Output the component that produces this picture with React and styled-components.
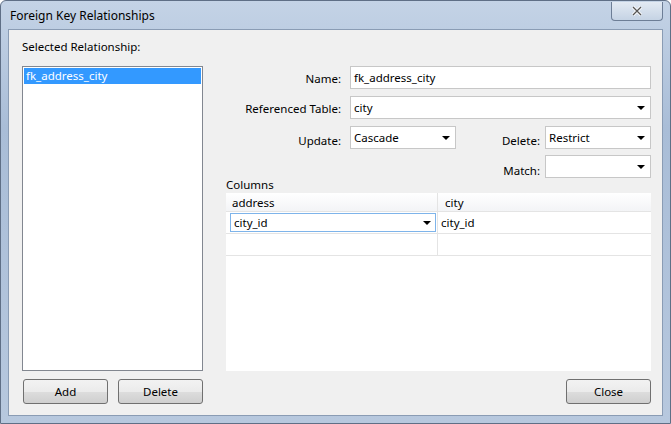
import React from "react";
import styled, { createGlobalStyle } from "styled-components";

const G = createGlobalStyle`
  html,body{margin:0;padding:0;}
  body{font-family:"Noto Sans","DejaVu Sans",sans-serif;font-size:11.5px;color:#000;}
`;
const Frame = styled.div`
  width:671px;height:424px;box-sizing:border-box;display:flex;flex-direction:column;
  background:linear-gradient(180deg,#c4d3e6 0%,#a9bdd7 30%,#b7c8de 100%);
  border:1px solid #5f6f86;border-radius:6px 6px 0 0;padding:0 7px 7px;
`;
const TitleBar = styled.div`
  height:29px;display:flex;align-items:center;justify-content:space-between;padding-left:2px;
`;
const Title = styled.span`font-size:12px;color:#000;`;
const CloseX = styled.div`
  width:52px;height:19px;margin-top:-8px;box-sizing:border-box;border:1px solid #6d7e96;border-top:none;
  border-radius:0 0 4px 4px;background:linear-gradient(#e3eaf3,#c5d3e4);display:flex;align-items:center;justify-content:center;
`;
const Body = styled.div`
  flex:1;background:#f0f0f0;border:1px solid #8a9cb4;display:flex;flex-direction:column;
  padding:9px 11px 11px 13px;
`;
const Caption = styled.div`height:20px;line-height:16px;`;
const Main = styled.div`display:flex;gap:23px;height:305px;margin-top:7px;`;
const List = styled.div`width:181px;box-sizing:border-box;border:1px solid #828790;background:#fff;padding:1px;`;
const ListItem = styled.div`background:#3399ff;color:#fff;height:16px;line-height:15px;padding-left:2px;`;
const Right = styled.div`flex:1;display:flex;flex-direction:column;`;
const Row = styled.div`display:flex;align-items:flex-start;height:23px;margin-bottom:${p=>p.mb||7}px;`;
const Label = styled.div`width:${p=>p.w||115}px;text-align:right;padding-top:${p=>p.pt||5}px;margin-right:${p=>p.mr||9}px;flex:none;`;
const Field = styled.div`
  ${p=>p.w?`width:${p.w}px;`:"flex:1;"}height:23px;box-sizing:border-box;border:1px solid #c7c7c7;background:#fff;
  display:flex;align-items:center;justify-content:space-between;padding:0 5px 0 3px;
`;
const Arrow = styled.span`width:0;height:0;border-left:4px solid transparent;border-right:4px solid transparent;border-top:4px solid #000;`;
const ColsLabel = styled.div`height:15px;line-height:13px;margin-top:-7px;`;
const Table = styled.div`flex:1;background:#fff;display:flex;flex-direction:column;`;
const TRow = styled.div`display:grid;grid-template-columns:212px 1fr;height:${p=>p.h}px;`;
const Cell = styled.div`
  border-right:${p=>p.last?"none":"1px solid #e4e4e4"};border-bottom:1px solid #e4e4e4;
  display:flex;align-items:center;padding-left:${p=>p.pl||4}px;
  ${p=>p.head?"background:linear-gradient(#fff,#f3f4f6);":""}
`;
const EditCell = styled.div`
  flex:1;align-self:stretch;margin:1px 1px 1px 0;border:1px solid #7eb4ea;display:flex;align-items:center;justify-content:space-between;padding:0 4px 0 3px;
`;
const Bottom = styled.div`display:flex;align-items:center;margin-top:8px;gap:10px;`;
const Btn = styled.div`
  width:85px;height:25px;box-sizing:border-box;border:1px solid #707070;border-radius:3px;
  background:linear-gradient(#f2f2f2 0%,#ebebeb 50%,#dddddd 51%,#cfcfcf 100%);
  display:flex;align-items:center;justify-content:center;${p=>p.push?"margin-left:auto;":""}
  ${p=>p.first?"margin-left:1px;":""}
`;

export default function App(){
  return (<><G/>
  <Frame>
    <TitleBar><Title>Foreign Key Relationships</Title>
      <CloseX><svg width="12" height="10" viewBox="0 0 12 10"><path d="M2 1L10 9M10 1L2 9" stroke="#fff" strokeWidth="3"/><path d="M2 1L10 9M10 1L2 9" stroke="#555" strokeWidth="1.3"/></svg></CloseX>
    </TitleBar>
    <Body>
      <Caption>Selected Relationship:</Caption>
      <Main>
        <List><ListItem>fk_address_city</ListItem></List>
        <Right>
          <Row><Label>Name:</Label><Field>fk_address_city</Field></Row>
          <Row><Label>Referenced Table:</Label><Field>city<Arrow/></Field></Row>
          <Row mb={6}><Label pt={7}>Update:</Label><Field w={106}>Cascade<Arrow/></Field>
            <Label w={84} pt={7} mr={5}>Delete:</Label><Field w={106}>Restrict<Arrow/></Field></Row>
          <Row mb={0}><Label w={314} pt={8} mr={5}>Match:</Label><Field w={106}><span/><Arrow/></Field></Row>
          <ColsLabel>Columns</ColsLabel>
          <Table>
            <TRow h={19}><Cell head pl={6}>address</Cell><Cell head last pl={7}>city</Cell></TRow>
            <TRow h={22}><Cell pl={0}><EditCell>city_id<Arrow/></EditCell></Cell><Cell last pl={3}>city_id</Cell></TRow>
            <TRow h={22}><Cell/><Cell last/></TRow>
          </Table>
        </Right>
      </Main>
      <Bottom>
        <Btn first>Add</Btn><Btn>Delete</Btn><Btn push>Close</Btn>
      </Bottom>
    </Body>
  </Frame></>);
}
